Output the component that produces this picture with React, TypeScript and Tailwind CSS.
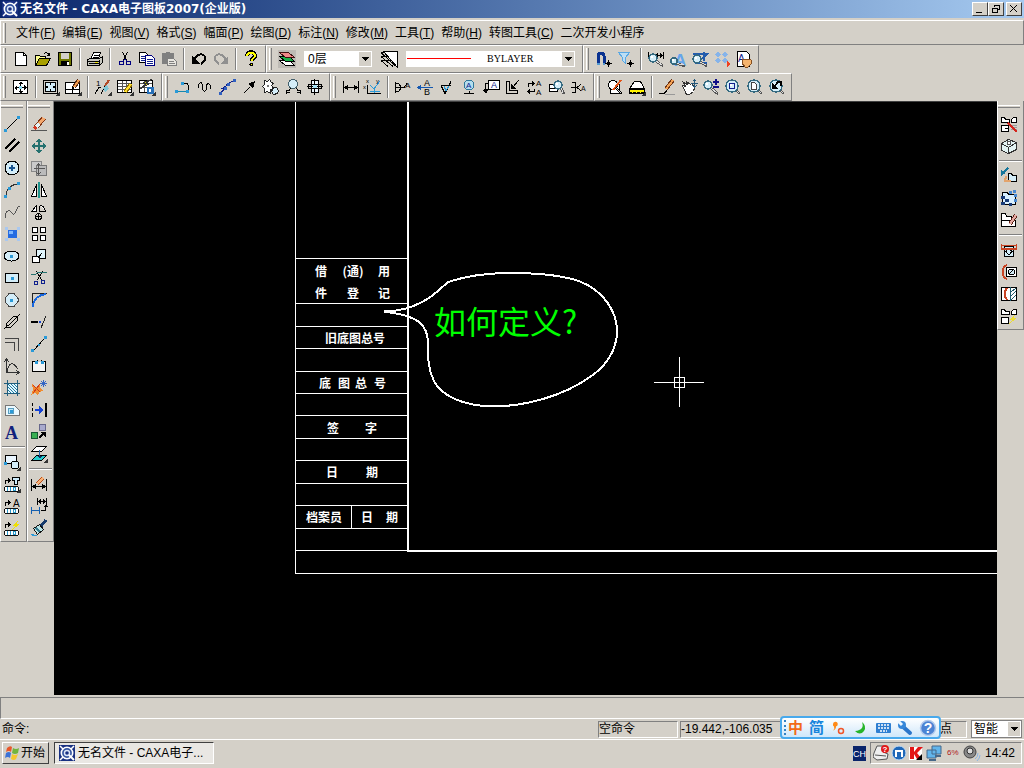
import React from "react";

type PathShape = { kind: "path"; d: string; s: string; f: string; w: number };
type LetterShape = { kind: "letter"; ch: string; x: number; y: number; size: number; color: string; serif: boolean };
type Shape = PathShape | LetterShape;

const K = "#000";
const SKY = "#2a9ad8";
const PALE = "#d4edf8";
const NAVY = "#10208c";

const p = (d: string, s = K, f = "none", w = 1): Shape => ({ kind: "path", d, s, f, w });
const fill = (d: string, f: string): Shape => p(d, "none", f);
const c = (x: number, y: number, r: number, s = K, f = "none", w = 1): Shape =>
  p(`M${x - r} ${y}a${r} ${r} 0 1 0 ${r * 2} 0a${r} ${r} 0 1 0 ${-r * 2} 0`, s, f, w);
const l = (ch: string, x: number, y: number, size = 8, color = K, serif = false): Shape => ({
  kind: "letter", ch, x, y, size, color, serif,
});
const dots = (pts: number[][], color = SKY): Shape =>
  fill(pts.map(([x, y]) => `M${x} ${y}h3v3h-3z`).join(""), color);
const corner = fill("M17 12v5h-5z", "#333");
const glass = (x: number, y: number, r: number): Shape[] => [
  p(`M${x + r * 0.7} ${y + r * 0.7}L15 15`, "#555", "none", 2.5),
  p(`M${x + r * 0.8} ${y + r * 0.8}L14 14`, "#ddd", "none", 1),
  c(x, y, r, "#356a80", PALE, 1.5),
  fill(`M${x - 2} ${y - 2}h2v2h-2z`, "#fff"),
];
const pencil = (x: number, y: number): Shape[] => [
  p(`M${x} ${y}l5 -7`, "#5a2a10", "none", 4),
  p(`M${x} ${y}l5 -7`, "#f09a4c", "none", 2),
  fill(`M${x - 2} ${y + 3}l0 -4 3 2z`, K),
];
const chip = [
  p("M1.5 10.5h12l1 1v3l-1 1h-12l-1-1v-3z", "#111", "#fff"),
  fill("M3 11h1v4h-1zM6 11h1v4h-1zM9 11h3v1h-3zM9 14h3v1h-3zM9 12h1v2h-1zM11 12h1v2h-1z", "#2997c8"),
];

const icons: Record<string, Shape[]> = {
  fresh: [p("M2.5 1.5h8l3 3v10h-11z", K, "#fff"), p("M10.5 1.5v3h3")],
  open: [p("M.5 13.5v-9h4l1 1h5v2", K, "#ffff90"), p("M.5 14.5l4-7h11l-4 7z", K, "#a8a000"), p("M9 3q3-3 5 1M11.5 4.5h3v-3")],
  save: [p("M1.5 1.5h13v13h-13z", K, "#707800"), fill("M4 2h8v6h-8z", "#d4d0c8"), fill("M4 10h8v4h-8z", K), fill("M10 11h2v3h-2z", "#fff")],
  print: [p("M3.5 8.5l3-7h7l-2 6", K, "#fff"), p("M6.5 4.5h5M5.5 6.5h5"), p("M.5 8.5l3-1h9l3-2v6l-3 3h-12z", K, "#c8c8c0"), p("M1 10.5h12M2 12.5h10M12.5 9v5"), fill("M8 11h3v1h-3z", "#e8e000")],
  cut: [p("M5.5 1l4 8M10.5 1l-4 8"), c(4.5, 12, 2, "#000080"), c(11.5, 12, 2, "#000080"), p("M7.5 8l-2 3M8.5 8l2 3", "#000080")],
  copy: [p("M.5 1.5h6l2 2v8h-8z", K, "#fff"), p("M2 5.5h4M2 7.5h4M2 9.5h4", NAVY), p("M6.5 4.5h6l3 3v7h-9z", "#000080", "#fff"), p("M8 8.5h6M8 10.5h6M8 12.5h6", NAVY)],
  paste: [fill("M1 2h4v-1h4v1h4v11h-12z", "#808080"), p("M6.5 7.5h6l3 3v4h-9z", "#808080", "#e8e6e0"), p("M8 10.5h5M8 12.5h6", "#808080")],
  undo: [p("M3 9C6 3 11 2 13.5 5C15 8 13 11 10 13", K, "none", 2), fill("M1 5v8h8z", K)],
  redo: [p("M13 9C10 3 5 2 2.5 5C1 8 3 11 6 13", "#909090", "none", 2), fill("M15 5v8h-8z", "#909090")],
  help: [p("M4 5C4 0 12 0 12 5C12 7 8.5 7 8.5 10", K, "none", 4), p("M4 5C4 1 12 1 12 5C12 7 8.5 7 8.5 10", "#ffff00", "none", 2), c(8.5, 13.5, 1.5, K, "#ffff00")],
  layers: [fill("M-1 -1h18v18h-18z", "#bdbab4"), p("M.5 9.5h10l5 5h-9z", K, "#fff"), p("M.5 5.5h10l5 5h-9z", K, "#18b048"), p("M.5 1.5h9l6 5h-9z", "#401010", "#ef8888")],
  layerstyle: [p("M0 1.5h5M0 5.5h7M0 9.5h11M0 1.5l14 13M0 5.5l12 10M0 9.5l7 6"), p("M2.5 .5h14v16z", K, "#fff")],
  magnet: [p("M2 12V5C2 1 8 1 8 5V12", "#0a3290", "none", 3), p("M1 13h3M7 13h2", "#5599d0", "none", 2), p("M12.5 8.5v7M9 12.5h7"), c(12.5, 12.5, 1.5)],
  funnel: [p("M.5 1.5h11l-4 5v6l-3-3v-3z", "#58a8e4", "#bcdef4"), p("M12.5 8.5v7M9 12.5h7"), c(12.5, 12.5, 1.5)],
  dimfind: [p("M.5 1v7M15.5 1v7M5 4.5h10M8 4.5l2-2M8 4.5l2 2M14 4.5l-2-2M14 4.5l-2 2"), ...glass(5, 7, 4)],
  textfind: [l("A", 4, 15, 17, "#65a5ec"), ...glass(4, 10, 3)],
  symfind: [p("M1 3h14L5 12h10M12 1v9", "#235cad", "none", 2), ...glass(5, 8, 4)],
  grid4: [fill("M4 1l3 2.5-3 2.5-3-2.5zM11 1l3 2.5-3 2.5-3-2.5zM4 7l3 2.5-3 2.5-3-2.5zM11 7l3 2.5-3 2.5-3-2.5z", "#86b4ea"), fill("M13 10l3 3-3 3z", "#f04020")],
  sheet: [p("M1.5 .5h9l3 3v12h-12z", K, "#fff"), l("A", 2, 11, 10, NAVY), p("M6 9l3-1 6 1v4l-3 3h-3l-3-4z", "#855022", "#f5b46d")],
  fit: [p("M.5 1.5h14v13h-14z", K, "#fff"), p("M7.5 3v10M2 8.5h11"), fill("M5 5l3-3 2 3zM5 12l3 3 2-3zM4 6v5l-3-2zM11 6v5l3-2z", K), fill("M6 7h3v3h-3z", "#8ed8ef")],
  frame: [p("M.5 1.5h14v13h-14z", K, "#d4d0c8"), p("M2.5 3.5h10v9h-10z", K, PALE), fill("M3 7h2v2h-2zM10 7h2v2h-2zM7 4h1v2h-1zM7 10h1v2h-1z", K), corner],
  titleblock: [p("M.5 3.5h14v11h-14z", K, "#fff"), p("M1 10.5h13M7.5 10v4"), ...pencil(9, 8), corner],
  serial: [l("1", 1, 7, 8), p("M0 14.5l4-6h2M6 14.5l4-7h3"), p("M10 7l4-6", "#b44c28", "none", 2), fill("M8 9l4-3 2 4-4 3z", "#83c7d6"), corner],
  tableedit: [p("M.5 1.5h14v12h-14z", K, "#fff"), p("M1 4.5h13M1 7.5h13M1 10.5h13M5.5 2v11M9.5 2v11", "#555"), p("M8 13l6-8", "#907000", "none", 4), p("M8 13l6-8", "#ffe030", "none", 2), corner],
  tablelib: [p("M.5 1.5h13v12h-13z", K, "#fff"), p("M1 4.5h12M1 8.5h12M5.5 2v11", "#555"), p("M13 0L4 4l3 1-6 5 9-5-3-1z", "#333", "#e0e000"), fill("M8 8h7v7h-7z", "#2770b8"), fill("M10 10h2v3h-2z", "#fff"), corner],
  polyline: [p("M8 4.5h4q4 4 0 8"), p("M1 12.5h12", "#1688ae"), dots([[0, 11], [11, 11], [6, 3]])],
  wave: [p("M1.5 9C1.5 2 5.5 2 5.5 8S9.5 13 9.5 8S13.5 3 13.5 10")],
  zigzag: [p("M1 14.5l5-5h-3l7-4h-3l8-4", NAVY), dots([[0, 13], [5, 8], [8, 4], [14, 0]], "#3060c0")],
  arrow: [p("M3 14l6-6", K, "none", 1), fill("M14 2l-2 8-5-5z", K)],
  gear: [p("M1.5 1.5l3 1 2-2 2 3 2 1-2 2 2 3-3 1 0 4-3-2-3 1 0-4-2-2 2-2z", "#222", "#fff"), p("M10.5 8.5h3l2 3-1 3-4 1-2-3z", "#222", PALE), c(5, 7, 1, "#777", PALE)],
  balloon: [c(8, 5, 4.5, "#44606c", PALE), p("M1.5 15v-4h3l1-2M15.5 15v-4h-3l-1-2M1 13.5h4M12 13.5h4")],
  hole: [p("M4.5 1.5h7v12h-7z", K, "#eef8ff"), p("M1.5 5.5h13v4h-13z"), p("M0 7.5h16M7.5 0v16"), fill("M6 6h4v3h-4z", "#a4e1f5")],
  dim: [p("M.5 2v12M15.5 2v12M1 8.5h14"), fill("M1 8.5l4-3v6zM15 8.5l-4-3v6z", K)],
  coorddim: [p("M2.5 6v8.5h13"), p("M5 6l4 4 6-8M9.5 10v4M5 12.5h10", SKY), l("x", 1, 4, 6), l("y", 11, 4, 6), l("x", -2, 10, 6)],
  datum: [p("M.5 3v11M.5 4.5h3q4 4 0 8h-3M1 8.5h8l3-4"), l("A", 10, 9, 8)],
  datumref: [l("A", 7, 7, 9), l("B", 7, 16, 9), p("M16 8.5H1", "#1558b0"), fill("M0 8.5l4-3v6z", "#1558b0")],
  rough: [p("M2 6.5h10M2 6.5l4 8 6-12"), p("M5 7l2 5 3-5", SKY)],
  weld: [c(8, 6, 5, "#30789a", "#b4deee"), l("A", 5, 9, 8, NAVY), p("M3 14.5h10M8.5 12v3")],
  leader: [p("M5.5 1.5h11v9h-11z", K, "#fff"), l("A", 8, 9, 9, NAVY), p("M2.5 14V4.5h3M1 10.5h4"), fill("M0 11h5l-2 4z", K)],
  chamfer: [p("M1.5 2.5h3v9h8v3h-11z"), p("M14 1L8 8"), fill("M6 5v5h5z", K)],
  replace: [p("M1 4.5h6M1 4.5v3M7 12.5H1M7 12.5v-3"), fill("M5 2l3 2.5-3 2.5zM3 10l-3 2.5 3 2.5z", K), l("A", 9, 7, 8), l("A", 9, 16, 8)],
  searchdim: [p("M.5 5.5h8v7h-8z", K, "#fff"), p("M1 9.5h6"), ...glass(9, 6, 4)],
  tolerance: [p("M.5 3.5h4v10h-4M0 8.5h5M10 5l-4 3.5 4 3.5"), l("A", 10, 12, 7)],
  redraw: [p("M3.5 5.5h9v9h-9z", K, "#fff"), c(6, 6, 4.5, K, "#fff"), p("M6 11l8-10", "#e45518", "none", 2), p("M9 9l6 6", K, "none", 2), p("M9 9l5 5", "#ddd")],
  eraserbar: [p("M.5 9.5l5-7h6l4 7z", K, "#fff"), fill("M0 10h16v5h-16z", K), fill("M1 11h14v2h-14z", "#fff200"), p("M3.5 13v1M7.5 13v1M11.5 13v1", "#fff200"), corner],
  pen: [p("M0 14.5h5l3-3"), p("M7 10l7-9", "#6e3516", "none", 4), p("M7 10l7-9", "#f4a254", "none", 2), p("M6 15.5h10", "#999")],
  hand: [p("M1.5 6.5l3 1-2-4 4 2-1-3 4 3 1-1 3 4-1 4-4 3h-3z", "#333", "#fff"), p("M13.5 0v8M10 4.5h7", "#23577a"), p("M11.5 2.5l2-2 2 2M11.5 6.5l2 2 2-2", "#23577a")],
  zoompm: [...glass(5, 6, 4), p("M13 0v6M10 3h6M10 8h6", "#111188", "none", 2)],
  zoomwin: [...glass(7, 7, 6), p("M4.5 4.5h5v5h-5z", NAVY, "none")],
  zoompage: [...glass(7, 7, 6), p("M4.5 3.5h3l2 2v5h-5z", "#444", "#fff")],
  zoomprev: [...glass(7, 7, 6), fill("M3 4v6h6z", K), p("M5 8l4-5h3v4", K, "none", 2)],
  line: [p("M2 14L14 2"), dots([[0, 13], [13, 0]])],
  parallel: [p("M1 11L11 1M5 14L15 4", K, "none", 1.6)],
  circle: [c(8, 8, 7, K, PALE), p("M8 5v6M5 8h6", "#175491", "none", 2)],
  arc: [p("M2 14C2 8 6 3 13 2", "#333"), dots([[0, 13], [4, 5], [13, 0]])],
  spline: [p("M1.5 14C1 7 5 5 7 8S10 12 12 7S14 2 16 2", "#555")],
  point: [fill("M4 4h9v8h-9z", "#246be2"), dots([[1, 1], [13, 1], [1, 12], [13, 12]], "#a9c8f0"), fill("M5 5h4v3h-4z", "#7db7ff")],
  ellipse: [p("M0 8a7.5 5 0 1 0 15 0a7.5 5 0 1 0-15 0", K, PALE), dots([[6, 7]])],
  rect: [p("M1.5 3.5h13v9h-13z", K, PALE), dots([[7, 7]])],
  polygon: [p("M5 1.5h5l4 5v3l-4 5H5l-4-5v-3z", "#444", PALE), dots([[6, 7]])],
  link: [p("M2.5 9.5l7-7h4v4l-7 7h-4z"), p("M4 12l8-8M0 15l4-4M12 4l4-4")],
  offset: [p("M1 2.5h13.5V15M1 6.5h9.5V15", "#444")],
  axes: [p("M2.5 1v13.5h13M0 4l2.5-3L5 4M12 12l3 2.5-3 2.5M3 14C5 3 9 4 14 11", "#333")],
  hatch: [p("M3.5 3.5h10v10h-10z", "#124d66", "#e3f7ff"), p("M0 3.5h16M0 13.5h16M3.5 0v16M13.5 0v16", "#205d7c"), p("M4 10l3 3M4 7l6 6M4 4l9 9M7 4l6 6M10 4l3 3", "#207da2")],
  region: [p("M1.5 3.5h9l5 5v5h-14z", "#777", "#eaf9ff"), c(7, 9, 3, "#599ec0", "#c3e8f8"), dots([[6, 8]])],
  textA: [l("A", 1, 15, 18, "#12227c", true)],
  shapes: [p("M1.5 1.5h11v8h-11z", K, "#eaf6ff"), c(11, 11, 4, K, PALE), dots([[0, 8]]), corner],
  chipT: [...chip, p("M1.5 8V4.5h4"), fill("M4 2l3 2.5-3 2.5z", K), p("M8.5 1.5h7v3h-2v4h-3v-4h-2z", K, "#cceafa"), corner],
  chipA: [...chip, p("M1.5 8V4.5h4"), fill("M4 2l3 2.5-3 2.5z", K), l("A", 9, 9, 10)],
  chipF: [...chip, p("M1.5 8V4.5h4"), fill("M4 2l3 2.5-3 2.5z", K), fill("M14 0L8 6h3L8 10l8-6h-3z", "#f0e000")],
  erase: [p("M0 14.5h16", "#555"), p("M5 11l8-9", "#803616", "none", 5), p("M7 9l6-7", "#f4a86d", "none", 3), p("M5 11l3-3", "#e2f5fa", "none", 4), p("M3 13l2-2", "#d43720", "none", 4)],
  move: [p("M8 1v14M1 8h14", "#26716f", "none", 2), fill("M5 4l3-4 3 4zM5 12l3 4 3-4zM4 5L0 8l4 3zM12 5l4 3-4 3z", "#26716f")],
  copyobj: [p("M.5 1.5h10v10h-10z", "#888", "#cacaca"), p("M5.5 5.5h10v10h-10z", "#777", "#bbb"), p("M7.5 3v11M3 8.5h11M5.5 5.5l2-2 2 2M5.5 12.5l2 2 2-2", "#555")],
  mirror: [p("M5.5 2.5v12h-5zM10.5 2.5v12h5z", K, "#fff"), p("M8 0v16", "#21948c", "none", 2)],
  rotate: [p("M.5 7.5l5-6v6zM8.5 7.5v-6M8.5 1.5q5 0 6 6M8 7.5h7", K, "#fff"), c(7.5, 12.5, 3), p("M7.5 10v5M5 12.5h5")],
  array: [p("M1.5 1.5h5v5h-5zM9.5 1.5h5v5h-5zM1.5 9.5h5v5h-5zM9.5 9.5h5v5h-5z", K, "#fff")],
  scale: [p("M5.5 1.5h9v9h-9z", K, "#e0f4fb"), p("M1.5 8.5h7v6h-7z", K, "#fff"), p("M7 10l4-5")],
  trim: [p("M5.5 1l5 9M11.5 1l-5 9"), p("M0 4.5h4l3-2h9", "#26716f"), c(5, 13, 2, NAVY), c(12, 12, 2, NAVY)],
  fillet: [p("M1.5 15V1.5H16", "#222"), p("M2 15C2 7 8 3 15 2", "#1766de", "none", 2)],
  extend: [p("M0 8h7", K, "none", 2), fill("M8 7h2v2H8z", "#1744d4"), p("M10 14l5-12", "#222")],
  stretch: [p("M2 15L14 2", K), dots([[0, 13], [13, 0]]), fill("M7 8h2v2h-2z", SKY)],
  breakit: [p("M6 3.5H1.5v10h13v-10H11", K, "#f5f5f5"), p("M6.5 2v3M10.5 2v3"), dots([[4, 3], [10, 3]])],
  explode: [fill("M1 4l4 3 4-4v5l3 3-4 1-1 4-3-3-4 2 2-5z", "#f08c30"), p("M2 5l7 7M9 4l-7 9", "#d03818"), p("M9 3.5h7M12.5 0v7M10 1l5 5M10 6l5-5", "#3466c5")],
  toline: [p("M1.5 1v3M1.5 6v3M1.5 11v4"), p("M4 8h6", "#1744d4", "none", 2), fill("M8 4l5 4-5 4z", "#1744d4"), p("M15 1v14", K, "none", 2)],
  linkcopy: [p("M.5 8.5h6v6h-6z", "#165933", "#38b052"), p("M8.5 .5h6v6h-6z", "#68688c", "#a9aacd"), p("M8 14l4-4", K, "none", 2), fill("M9 8h6v6z", K)],
  slice: [p("M5.5 .5h10l-5 5H.5z", K, "#fff"), p("M5.5 9.5h10l-5 5H.5z", K, "#27cdcf"), p("M8.5 4v8", "#2362a5"), fill("M6 10h5l-2 3z", "#103060"), corner],
  editdim: [p("M.5 3v12M15.5 3v12M1 10.5h14"), fill("M1 10.5l4-3v6zM15 10.5l-4-3v6z", K), p("M6 8l6-6", "#ba4d1a", "none", 4), p("M6 8l6-6", "#f7b378", "none", 2)],
  dimdrive: [p("M6.5 0v7M15.5 0v7M7 3.5h9"), fill("M7 3.5l3-3v6zM15 3.5l-3-3v6z", K), p("M.5 9v7M8.5 9v7M1 12.5h7", "#1560b0"), p("M10 12.5h4.5V9"), fill("M13 9h4l-2-3z", K)],
  brush: [p("M10 6l5-6", "#173b6c", "none", 3), p("M2.5 8.5l6-4 4 5-6 5z", "#111", "#bae5e7"), p("M5 8l4 4", "#387b8e", "none", 2), p("M3 14l-3 1M6 15.5H1", SKY)],
  part1: [p("M.5 1.5h3l1 2h4v3h-8zM10.5 3.5l2-2h3v5h-5zM.5 9.5h7v6h-7zM3.5 12.5h4", K, "#fff"), p("M10 9.5h6M10 11.5h6M10 13.5h6", "#999", "none", 1), p("M7 7l9 9", "#d5251d", "none", 1.6)],
  cube: [p("M.5 5.5l7-4 8 3v7l-8 4-7-3zM.5 5.5l7 4v6M7.5 9.5l8-5", "#333", "#e4f4f3"), c(8, 5, 2, "#555", "#fff")],
  partmove: [p("M7.5 5.5h3l1 2h4v6h-8z", K, PALE), p("M1 6l6-6", "#17779c", "none", 2), fill("M0 2v6l5-3z", "#17779c"), p("M5 8l-1 5h6", "#e3a36b", "none", 2)],
  partgrid: [p("M1.5 2.5h5l1 2h7v10h-13z", K, "#d9f0ff"), fill("M0 6h4v3H0zM4 9h4v3H4zM0 12h4v3H0zM8 13h3v3H8z", "#183b78"), dots([[8, 1], [12, 0], [13, 4], [13, 9]], "#4888d0")],
  partedit: [p("M.5 1.5h4l1 3h5v4h-10zM.5 8.5h14v6h-14z", K, "#fff"), p("M9 12l6-9", "#5a2013", "none", 4), p("M9 12l6-9", "#e5aaa4", "none", 2)],
  clamp: [p("M3.5 4.5h9v10h-9z", K, PALE), p("M8 6l3 3.5-3 3.5-3-3.5z"), p("M.5 2v5h15V2M1 3.5h14", "#c84424", "none", 1.6)],
  clamp2: [p("M5.5 3.5h10v9h-10z", K, "#fff"), c(10.5, 8, 3, K, PALE), p("M8 10l4-4"), p("M6 1C0 3 0 13 6 15", "#c84424", "none", 2)],
  section: [p("M.5 1.5h15v13h-15z", K, "#fff"), p("M6 2q-5 6 0 12", "#c84424", "none", 2), p("M9.5 1v14M10 6l5-4M10 10l5-5M10 14l5-5", "#225c6e")],
  partflash: [p("M.5 1.5h3l1 2h4v3h-8zM10.5 3.5l2-2h3v5h-5zM.5 9.5h7v6h-7z", K, "#fff"), fill("M14 7l-6 5h3l-3 4 8-6h-3z", "#eddd31")],
};

function Icon({ name, className = "size-4" }: { name: string; className?: string }) {
  return (
    <svg viewBox="0 0 16 16" className={`${className} overflow-visible`} shapeRendering="crispEdges" aria-hidden="true">
      {icons[name].map((s, i) =>
        s.kind === "path" ? (
          <path key={i} d={s.d} stroke={s.s} fill={s.f} strokeWidth={s.w} />
        ) : (
          <text key={i} x={s.x} y={s.y} fontSize={s.size} fill={s.color} fontWeight={s.size > 12 ? 700 : 400} fontFamily={s.serif ? "Liberation Serif, serif" : "Liberation Sans, sans-serif"}>
            {s.ch}
          </text>
        ),
      )}
    </svg>
  );
}

function Tool({ name }: { name: string }) {
  return (
    <button type="button" aria-label={name} className="flex size-[22px] shrink-0 items-center justify-center">
      <Icon name={name} />
    </button>
  );
}

/* "|" stands for a separator between groups of tools. */
function Tools({ names, vertical = false }: { names: string; vertical?: boolean }) {
  return (
    <>
      {names.split(" ").map((n, i) =>
        n === "|" ? (
          vertical ? (
            <span key={i} className="flex h-2 w-full items-center px-px"><span className="h-[2px] w-full border-t border-[#808080] bg-white" /></span>
          ) : (
            <span key={i} className="flex h-[22px] w-2 justify-center"><span className="w-[2px] border-l border-[#808080] bg-white" /></span>
          )
        ) : (
          <Tool key={i} name={n} />
        ),
      )}
    </>
  );
}

function Band({ children }: { children: React.ReactNode }) {
  return (
    <div className="flex h-7 items-center border-t border-r border-b border-l border-t-white border-r-[#808080] border-b-[#808080] border-l-white pr-[3px] pl-[2px]">
      <span className="mr-1 h-[22px] w-[3px] border-r border-l border-r-[#808080] border-l-white" />
      {children}
    </div>
  );
}

function SideBar({ names }: { names: string }) {
  return (
    <div className="flex w-[27px] flex-col items-start self-start border-r border-b border-l border-r-[#808080] border-b-[#808080] border-l-white pt-1 pb-[2px]">
      <span className="mb-[5px] h-[3px] w-[22px] border-t border-b border-t-white border-b-[#808080]" />
      <Tools names={names} vertical />
    </div>
  );
}

function Arrow() {
  return (
    <span className="pointer-events-none absolute top-px right-px bottom-px flex w-3 items-center justify-center bg-[#d4d0c8]">
      <svg viewBox="0 0 7 4" className="h-1 w-[7px]" shapeRendering="crispEdges" aria-hidden="true"><path d="M0 0h7L3.5 4z" /></svg>
    </span>
  );
}

function Logo() {
  return (
    <svg viewBox="0 0 16 16" className="size-4 shrink-0" aria-hidden="true">
      <path d="M0 0h16v16H0z" fill="#183082" />
      <path d="M1 1l3 3M15 1l-3 3M1 15l3-3" stroke="#fff" strokeWidth="1.5" />
      <circle cx="8" cy="8" r="5.7" fill="#3555a0" stroke="#fff" strokeWidth="1.6" />
      <circle cx="8" cy="8" r="2.5" fill="#183082" stroke="#dce6f8" strokeWidth="1.4" />
      <path d="M10 10l5 5" stroke="#fff" strokeWidth="2" />
    </svg>
  );
}

const menus: [string, string][] = [
  ["文件", "F"], ["编辑", "E"], ["视图", "V"], ["格式", "S"], ["幅面", "P"], ["绘图", "D"], ["标注", "N"],
  ["修改", "M"], ["工具", "T"], ["帮助", "H"], ["转图工具", "C"], ["二次开发小程序", ""],
];

const rowLines = [258, 303, 326, 348, 371, 393, 415, 438, 460, 483, 505, 528, 550];
const labels: [string, number, number][] = [
  ["借", 321, 276], ["(通)", 353, 276], ["用", 384, 276],
  ["件", 321, 298], ["登", 353, 298], ["记", 384, 298],
  ["旧底图总号", 355, 343],
  ["底", 325, 388], ["图", 344, 388], ["总", 361, 388], ["号", 380, 388],
  ["签", 333, 433], ["字", 371, 433],
  ["日", 332, 477], ["期", 372, 477],
  ["档案员", 324, 522], ["日", 367, 522], ["期", 392, 522],
];

function Drawing() {
  return (
    <svg className="absolute inset-0 size-full" role="img" aria-label="图纸">
      <g transform="translate(-54 -102)" fill="none" stroke="#fff">
        <g shapeRendering="crispEdges">
          <path d={`M295.5 102V573.5H4000${rowLines.map((y) => `M295 ${y + 0.5}H408`).join("")}M351.5 505V528`} />
          <path d="M408 102V551H4000" strokeWidth="2" />
          <path d="M654 382.5H704M679.5 357V407M674.5 377.5h10v10h-10z" />
          <path
            d="M384 311.5C400 311 411 308 420 303C433 297 440 289 448 282C466 276 488 273 510 273C538 273 562 275 580 281.5C604 291 617 312 617 331C617 351 605 368 587 379C565 394 530 406 493 406.5C462 406 441 395 434 381C428 369 428 358 428 346C428 333 425 327 419 322C411 316 400 314 384 311.5"
            strokeWidth="2"
          />
        </g>
        <g fill="#fff" stroke="none" fontSize="12" fontWeight="700" textAnchor="middle" fontFamily="Noto Sans CJK SC, sans-serif">
          {labels.map(([t, x, y], i) => <text key={i} x={x} y={y}>{t}</text>)}
        </g>
        <text x="434" y="334" fill="#00ff00" stroke="none" fontSize="32" fontFamily="Noto Sans CJK SC, sans-serif">如何定义?</text>
      </g>
    </svg>
  );
}

function WindowButton({ label, d }: { label: string; d: string }) {
  return (
    <button type="button" aria-label={label} className="flex h-[14px] w-4 items-center justify-center border border-t-white border-r-[#404040] border-b-[#404040] border-l-white bg-[#d4d0c8]">
      <svg viewBox="0 0 10 10" className="size-[10px]" shapeRendering="crispEdges" aria-hidden="true"><path d={d} fill="none" stroke="#000" strokeWidth="1.4" /></svg>
    </button>
  );
}

function InputBar() {
  return (
    <div className="absolute right-[83px] bottom-[29px] flex h-[23px] w-[161px] items-center rounded border-2 border-[#48a9ec] bg-gradient-to-b from-white to-[#cfe7fa] pl-[2px] text-[15px] leading-5">
      <span className="mr-[2px] h-[15px] border-l-2 border-dotted border-[#3182c4]" />
      <button type="button" className="w-[17px] font-bold text-[#f26a18]">中</button>
      <button type="button" className="ml-[6px] w-[17px] font-bold text-[#1684dc]">简</button>
      <svg viewBox="0 0 114 18" className="ml-[2px] h-[18px] w-[114px] shrink-0" aria-hidden="true">
        <path d="M7 5a2.4 2.4 0 1 1 3 2.4q0 3-3 4 2-2 1-4a2 2 0 0 1-1-2.4" fill="#ff8a18" />
        <circle cx="15" cy="12" r="2.5" fill="none" stroke="#f0562a" strokeWidth="1.5" />
        <path d="M36 3q3 8-7 9 5 5 9 0 3-5-2-9" fill="#26b52a" />
        <rect x="50" y="4" width="15" height="10" rx="1" fill="#2e7fd2" />
        <path d="M52 6h11M52 9h11M54 12h7" stroke="#fff" strokeWidth="1.4" strokeDasharray="2 1" />
        <path d="M75 6l9 8" stroke="#2b76cb" strokeWidth="4" strokeLinecap="round" />
        <circle cx="76" cy="6" r="4" fill="#3687d9" /><path d="M72 2l4 4" stroke="#edf7ff" strokeWidth="3" />
        <circle cx="102" cy="9" r="7.5" fill="#4b83d4" stroke="#b2caec" strokeWidth="1.5" />
        <text x="102" y="14" textAnchor="middle" fill="#fff" fontSize="14" fontWeight="700">?</text>
      </svg>
    </div>
  );
}

const well = "flex items-center border border-t-[#808080] border-r-white border-b-white border-l-[#808080]";

export default function App() {
  return (
    <div className="relative flex min-h-screen flex-col overflow-hidden bg-[#d4d0c8] font-['Liberation_Sans','Noto_Sans_CJK_SC',sans-serif] text-xs leading-4 text-black">
      <header className="flex h-[18px] items-center bg-gradient-to-r from-[#0a246a] to-[#a6caf0] pr-[2px] pl-[2px]">
        <Logo />
        <h1 className="ml-[2px] font-['DejaVu_Sans','Noto_Sans_CJK_SC',sans-serif] font-bold whitespace-nowrap text-white">无名文件 - CAXA电子图板2007(企业版)</h1>
        <div className="ml-auto flex">
          <WindowButton label="最小化" d="M1 8.5h6" />
          <WindowButton label="还原" d="M3.5 3V1.5h5v4H7M1.5 4.5h5v4h-5z" />
          <span className="w-[2px]" />
          <WindowButton label="关闭" d="M1 1l7 7M8 1L1 8" />
        </div>
      </header>

      <nav className="mt-[2px] flex h-[25px] items-center border border-t-white border-r-[#808080] border-b-[#808080] border-l-white pl-[2px]">
        <span className="mr-[7px] h-5 w-[3px] border-r border-l border-r-[#808080] border-l-white" />
        {menus.map(([t, k]) => (
          <button key={t} type="button" className="mr-px px-[3px] whitespace-nowrap last:mr-0">
            {t}{k && <>(<span className="underline">{k}</span>)</>}
          </button>
        ))}
      </nav>

      <div className="flex">
        <Band><Tools names="fresh open save | print | cut copy paste | undo redo | help" /></Band>
        <Band>
          <Tool name="layers" />
          <div className="relative mx-[6px] flex h-4 w-[68px] bg-white">
            <select aria-label="图层" className="w-full appearance-none pl-1 outline-none"><option>0层</option></select>
            <Arrow />
          </div>
          <Tool name="layerstyle" />
          <div className="relative mr-1 ml-[6px] flex h-4 w-[169px] bg-white">
            <svg viewBox="0 0 64 2" className="absolute top-[7px] left-px h-[2px] w-16" aria-hidden="true"><path d="M0 .5h64" stroke="#f00" /></svg>
            <select aria-label="线型" className="w-full appearance-none pl-[81px] font-['Liberation_Serif',serif] text-[10px] outline-none"><option>BYLAYER</option></select>
            <Arrow />
          </div>
        </Band>
        <Band><Tools names="magnet funnel | dimfind textfind symfind grid4 sheet" /></Band>
      </div>
      <div className="flex">
        <Band><Tools names="fit | frame titleblock | serial tableedit tablelib" /></Band>
        <Band><Tools names="polyline wave zigzag arrow gear balloon hole" /></Band>
        <Band><Tools names="dim coorddim | datum datumref rough weld leader chamfer replace searchdim tolerance" /></Band>
        <Band><Tools names="redraw eraserbar | pen hand zoompm zoomwin zoompage zoomprev" /></Band>
      </div>

      <div className="flex flex-1">
        <SideBar names="line parallel circle arc spline point ellipse rect polygon link offset axes hatch region textA | shapes chipT chipA chipF" />
        <SideBar names="erase move copyobj mirror rotate array scale trim fillet extend stretch breakit explode toline linkcopy slice | editdim dimdrive brush" />
        <main className="relative flex-1 overflow-hidden border-t border-[#404040] bg-black"><Drawing /></main>
        <SideBar names="part1 cube | partmove partgrid partedit | clamp clamp2 section partflash" />
      </div>

      <div className="mt-[2px] h-[22px] border-t border-b border-l border-t-[#808080] border-b-white border-l-[#808080]" />

      <div className="flex h-5 items-center gap-[2px] pr-[2px]">
        <label htmlFor="command" className="pl-[2px]">命令:</label>
        <input id="command" className="min-w-0 flex-1 outline-none" />
        <div className={`${well} h-[17px] w-20`}>空命令</div>
        <div className={`${well} h-[17px] w-[108px]`}>-19.442,-106.035</div>
        <div className={`${well} mr-[2px] h-[17px] w-[177px] justify-end pr-[14px]`}>点</div>
        <div className="relative flex h-[18px] w-[51px] border border-[#808080] bg-white">
          <select aria-label="捕捉方式" className="w-full appearance-none pl-[2px] outline-none"><option>智能</option></select>
          <Arrow />
        </div>
      </div>

      <footer className="flex h-[29px] items-start border-t border-white px-[2px] pt-[2px]">
        <button type="button" className="flex h-[22px] w-[47px] items-center gap-px border border-t-white border-r-[#404040] border-b-[#404040] border-l-white pl-px whitespace-nowrap">
          <svg viewBox="0 0 16 16" className="size-4 shrink-0" aria-hidden="true">
            <path d="M3 3q3-3 5-1L7 7Q5 5 2 7z" fill="#e8572a" /><path d="M9 3q3 2 6 0l-1 5q-3 2-6 0z" fill="#72b53c" />
            <path d="M2 8q3-2 5 0l-1 5q-2-2-5 0z" fill="#3c73d6" /><path d="M8 9q3 2 6 0l-2 5q-2 2-5 0z" fill="#f5c72c" />
          </svg>
          开始
        </button>
        <button type="button" className="ml-[5px] flex h-[22px] w-40 items-center gap-[3px] border border-t-[#404040] border-r-white border-b-white border-l-[#404040] bg-[#e9e7e3] pl-1 whitespace-nowrap">
          <Logo />
          无名文件 - CAXA电子...
        </button>
        <span className="mt-1 mr-1 ml-auto flex h-[15px] items-center justify-center bg-[#0a246a] text-[9px] text-white">CH</span>
        <div className={`${well} h-[22px] w-[152px] pl-[2px]`}>
          <svg viewBox="0 0 70 18" className="h-[18px] w-[70px]" aria-hidden="true">
            <path d="M1 9l3-7h7l-1 6 5 2-1 5-10 1-4-3z" fill="#eee" stroke="#555" /><path d="M2 11l11 1" stroke="#555" />
            <circle cx="12" cy="5" r="4" fill="#e01818" /><text x="12" y="8" textAnchor="middle" fill="#fff" fontSize="8" fontWeight="700">?</text>
            <circle cx="26" cy="9" r="7" fill="#1f68b8" stroke="#c4dcf3" /><path d="M23 13V7h6v6" fill="none" stroke="#fff" strokeWidth="2" />
            <path d="M36 3h13v13H36z" fill="#fff" /><path d="M37 3h4v5l4-5h5l-6 6 5 6h-5l-3-5v5h-4z" fill="#e31616" /><path d="M49 10v6h-6z" fill="#000" />
            <path d="M59 2h9v8h-9zM54 6h9v8h-9z" fill="#62b5eb" stroke="#476889" /><path d="M56 16h7M62 12h6" stroke="#476889" strokeWidth="2" />
          </svg>
          <span className="ml-1 w-4 text-[8px] text-[#b01818]">6%</span>
          <svg viewBox="0 0 18 18" className="size-[18px]" aria-hidden="true">
            <circle cx="7" cy="8" r="6" fill="#888" stroke="#444" /><circle cx="7" cy="7" r="3" fill="#ddd" stroke="#333" /><path d="M12 15q3-2 3-6M14 17q3-3 3-6" fill="none" stroke="#8ab5e5" />
          </svg>
          <span className="ml-auto pr-[6px]">14:42</span>
        </div>
      </footer>
      <InputBar />
    </div>
  );
}
